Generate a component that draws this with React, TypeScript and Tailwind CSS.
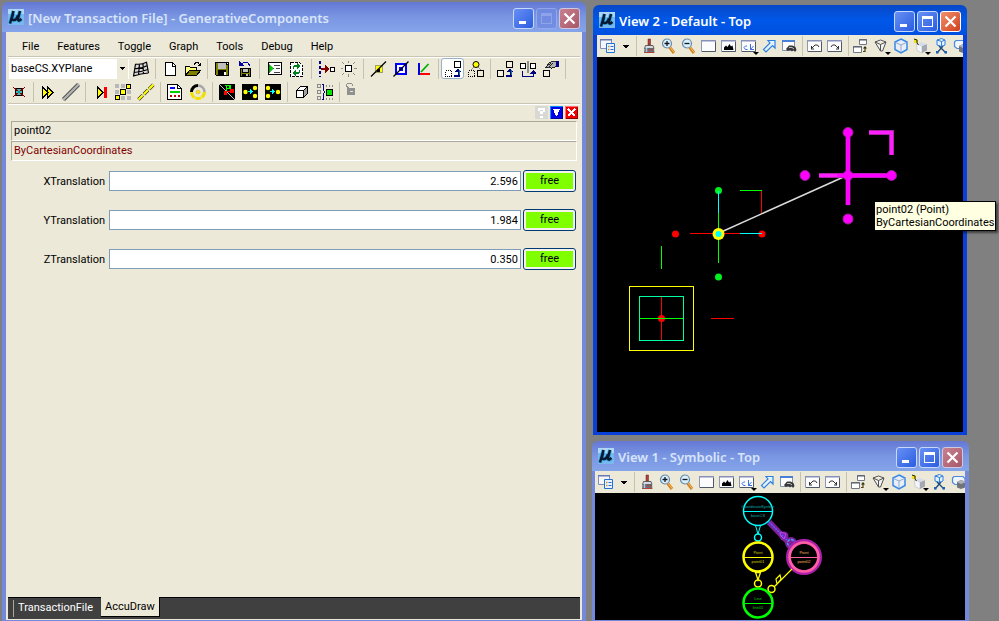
import type { ReactNode } from "react"
import { useState } from "react"
import clsx from "clsx"

type IconDef = { name: string; art: ReactNode; drop?: boolean; selected?: boolean }

function Pixels({ children, size = 16, smooth }: { children: ReactNode; size?: number; smooth?: boolean }) {
  return (
    <svg
      width={size}
      height={size}
      viewBox={`0 0 ${size} ${size}`}
      fill="none"
      shapeRendering={smooth ? "auto" : "crispEdges"}
      className="block shrink-0 overflow-visible"
      aria-hidden="true"
    >
      {children}
    </svg>
  )
}

function Box({ x, y, s = 6, fill = "none", stroke = "#000", dashed }: { x: number; y: number; s?: number; fill?: string; stroke?: string; dashed?: boolean }) {
  return <rect x={x + 0.5} y={y + 0.5} width={s} height={s} fill={fill} stroke={stroke} strokeDasharray={dashed ? "1 1" : undefined} />
}

const upArrow = (
  <>
    <path d="M9 14.500h4.500v-5" stroke="#000080" strokeWidth="2" />
    <path d="M13 7.500l3 3.500h-6z" fill="#000080" />
    <path d="M14 9h1v5h-1z" fill="#008080" />
  </>
)

const gridIcon = (
  <g shapeRendering="auto">
    <path d="M2.500 3Q8 4 14 1L15.500 12Q8 12 0.500 15.500z" fill="#d8d8d8" />
    <path d="M2.500 3Q8 4 14 1M2 7.500Q8 8 14.500 4.500M1 11.500Q8 11 15 8.500M0.500 15Q8 12.500 15.500 12M2.500 3L0.500 15.500M6.500 3L5.500 14M10 2.500L10.500 13M13.500 1L15.500 12" stroke="#000" strokeWidth="1.200" />
  </g>
)

const mainRowOne: IconDef[][] = [
  [{ name: "Work plane grid", art: gridIcon }],
  [
    {
      name: "New",
      art: (
        <>
          <path d="M3.500 1.500h7l3 3v9.500h-10z" fill="#fff" stroke="#000" />
          <path d="M10.500 1.500v3.500h3" stroke="#000" />
        </>
      ),
    },
    {
      name: "Open",
      art: (
        <>
          <path d="M0.500 14V5.500h4l1 1h6V10" fill="#ffff80" stroke="#000" />
          <path d="M0.500 14.500l4-5h11l-4 5z" fill="#808000" stroke="#000" />
          <path d="M9 3.500l2-2h2l2 2.500" stroke="#000" />
          <path d="M12 5h4V1z" fill="#000" />
        </>
      ),
    },
  ],
  [
    {
      name: "Save",
      art: (
        <>
          <path d="M1 1h14v14H2L1 14z" fill="#000" />
          <path d="M2 2h2v12H2zM12 4h2v10h-2zM4 8h8v1H4z" fill="#808000" />
          <path d="M4 2h8v6H4z" fill="#c0c0c0" />
          <path d="M10 11h2v3h-2zM13 2h1v1h-1z" fill="#fff" />
        </>
      ),
    },
    {
      name: "Save and revert",
      art: (
        <>
          <path d="M3 7h11v9H3z" fill="#000" />
          <path d="M4 8h1v7H4zM12 8h1v7h-1zM5 12h7v1H5z" fill="#808000" />
          <path d="M6 8h5v3H6zM9 13h2v2H9z" fill="#c0c0c0" />
          <path d="M4 3.500L6.500 1.500h4L13 5" stroke="#0000a0" />
          <path d="M2 0v5h5z" fill="#0000a0" />
        </>
      ),
    },
  ],
  [
    {
      name: "Run script",
      art: (
        <>
          <path d="M2.500 1.500h13v12h-13z" fill="#fff" stroke="#000" />
          <path d="M3 3.500v8l4.500-4z" fill="#00d000" stroke="#006000" strokeWidth="0.500" />
          <path d="M8 4.500h6M10 7.500h4M8 11.500h6" stroke="#404040" />
        </>
      ),
    },
    {
      name: "Update",
      art: (
        <>
          <path d="M1.500 1.500h9l3 3v11h-12z" fill="#fff" stroke="#000" strokeDasharray="3 1" />
          <path d="M4.500 8V6.500l1-1.500h3M10.500 8.500v2l-1 1.500h-3" stroke="#008020" strokeWidth="1.500" />
          <path d="M8 2l3.500 3L8 8zM7 9l-3.500 3L7 15z" fill="#008020" />
        </>
      ),
    },
  ],
  [
    {
      name: "Move to feature",
      art: (
        <>
          <path d="M2 0v16" stroke="#000090" strokeWidth="1.500" strokeDasharray="3 2" />
          <path d="M3 8h5" stroke="#800000" strokeWidth="2" />
          <path d="M7 4l5 4-5 4z" fill="#800000" />
          <Box x={12} y={6} s={4} fill="#fff" />
        </>
      ),
    },
    {
      name: "Highlight feature",
      art: (
        <>
          <Box x={4} y={4} fill="#fff" />
          <path d="M7.500 0v2M7.500 13v2.500M0 7.500h2M13 7.500h2.500M1 1l2 2M14 1l-2 2M1 14l2-2M14 14l-2-2" stroke="#909090" />
        </>
      ),
    },
  ],
  [
    {
      name: "Point",
      art: (
        <>
          <Box x={5} y={4} s={7} fill="#ffff00" stroke="#a0a060" />
          <path d="M1 15.500L16 0.500" stroke="#000" shapeRendering="auto" strokeWidth="1.200" />
          <path d="M7 8h3v3H7z" fill="#000" />
        </>
      ),
    },
    {
      name: "Plane",
      art: (
        <>
          <path d="M3 3h10v10H3z" stroke="#0000ff" strokeWidth="2" fill="#fff" />
          <path d="M6 6h4v4H6z" fill="#0000ff" />
          <path d="M0.500 15.500L15.500 0.500" stroke="#000" shapeRendering="auto" strokeWidth="1.200" />
        </>
      ),
    },
    {
      name: "Coordinate system",
      art: (
        <>
          <path d="M5 11l7.500-8" stroke="#00b000" strokeWidth="1.800" shapeRendering="auto" />
          <path d="M4 13h10" stroke="#ff0000" strokeWidth="2" />
          <path d="M3 2v12" stroke="#0000e0" strokeWidth="2" />
        </>
      ),
    },
  ],
  [
    {
      name: "Replicate",
      selected: true,
      art: (
        <>
          <Box x={0} y={9} dashed />
          <Box x={9} y={0} fill="#fff" />
          {upArrow}
        </>
      ),
    },
    {
      name: "Make dependent",
      art: (
        <>
          <path d="M6 6L3 9M10 6l3 3" stroke="#909090" />
          <circle cx="8" cy="3.500" r="3" fill="#ffff00" stroke="#000" shapeRendering="auto" />
          <Box x={0} y={9} dashed />
          <Box x={9} y={9} fill="#f0e8d0" />
        </>
      ),
    },
  ],
  [
    {
      name: "Copy up",
      art: (
        <>
          <Box x={0} y={9} fill="#f4efe0" />
          <Box x={9} y={0} fill="#f4efe0" />
          {upArrow}
        </>
      ),
    },
    {
      name: "Mirror",
      art: (
        <>
          <path d="M7 0h2v12H7z" fill="#909090" />
          <Box x={0} y={2} s={5} fill="#fff" />
          <Box x={10} y={2} s={5} fill="#fff" />
          <path d="M2.500 10v5h11v-4" stroke="#000080" />
          <path d="M13.500 9l3 3.500h-6z" fill="#000080" />
        </>
      ),
    },
    {
      name: "Edit by hand",
      art: (
        <>
          <Box x={0} y={9} fill="#f4efe0" />
          <path d="M2.500 6.500L6 2l3-1.500h4v4.500l-2 2-1-1-1.500 1.500L6 6l-3 1z" fill="#b0b0b0" stroke="#000" strokeWidth="0.800" />
          <path d="M5 4l3-2M6 5.500l4-3" stroke="#000" strokeWidth="0.800" />
          <path d="M13 0h3v6h-3z" fill="#000080" />
        </>
      ),
    },
  ],
]

const mainRowTwo: IconDef[][] = [
  [
    {
      name: "Delete",
      art: (
        <>
          <path d="M4.500 4.500h7v7h-7z" fill="#50b0b0" stroke="#000" />
          <path d="M2 3l12 10M14 3L2 13" stroke="#800000" />
          <path d="M7 7h2v2H7z" fill="#00a0a0" />
        </>
      ),
    },
  ],
  [
    {
      name: "Play all",
      art: <path d="M2.500 3v11L8 8.500zM7.500 3v11L13 8.500z" fill="#ffff00" stroke="#000" />,
    },
    {
      name: "Line",
      art: (
        <g shapeRendering="auto">
          <path d="M0.500 15.500L15.500 0.500" stroke="#303030" strokeWidth="4" />
          <path d="M0 16L16 0" stroke="#b0b0b0" strokeWidth="2.500" />
        </g>
      ),
    },
  ],
  [
    {
      name: "Step to end",
      art: (
        <>
          <path d="M5.500 3v11l5.500-5.500z" fill="#ffff00" stroke="#000" />
          <path d="M12 3h3v11h-3z" fill="#ff0000" />
        </>
      ),
    },
    {
      name: "Grid of points",
      art: (
        <>
          <path d="M0 0h4v4H0zM6 0h4v4H6zM0 6h4v4H0zM12 6h4v4h-4zM6 12h4v4H6zM12 12h4v4h-4z" fill="#b8b8b8" />
          <Box x={11} y={0} s={4} fill="#ffff00" />
          <Box x={5} y={5} s={5} fill="#ffff00" />
          <Box x={0} y={11} s={4} fill="#ffff00" />
        </>
      ),
    },
    {
      name: "Divide line",
      art: (
        <g shapeRendering="auto">
          <path d="M0.500 15.500L15.500 0.500" stroke="#303030" strokeWidth="3.500" strokeDasharray="6 1.500" />
          <path d="M0.500 15.500L15.500 0.500" stroke="#ffff00" strokeWidth="2.200" strokeDasharray="6 1.500" />
        </g>
      ),
    },
  ],
  [
    {
      name: "Report",
      art: (
        <>
          <path d="M0.500 0.500h10l4 4v11h-14z" fill="#fff" stroke="#000" />
          <path d="M10.500 0.500v4h4" stroke="#000" />
          <path d="M3 4h5" stroke="#0000ff" strokeWidth="2" />
          <path d="M3 8h10" stroke="#00d000" strokeWidth="2" />
          <path d="M3 12h10" stroke="#c00000" strokeWidth="2" strokeDasharray="2 2" />
        </>
      ),
    },
    {
      name: "Cycle",
      art: (
        <g shapeRendering="auto">
          <path d="M1.500 8A6.500 6.500 0 0 1 8 1.500" stroke="#000" strokeWidth="3" />
          <path d="M8 1.500A6.500 6.500 0 0 1 14.500 8" stroke="#a8a8a8" strokeWidth="2.500" />
          <path d="M14.500 8A6.500 6.500 0 0 1 1.500 8" stroke="#f0e000" strokeWidth="3" strokeDasharray="6 0.800" />
          <circle cx="8" cy="8" r="2" fill="#ffe000" stroke="#c0b060" strokeWidth="0.500" />
        </g>
      ),
    },
  ],
  [
    {
      name: "Model view",
      art: (
        <>
          <path d="M0 0h16v16H0z" fill="#000" />
          <path d="M0 0l16 16" stroke="#c0c0c0" />
          <path d="M7.500 8V2M6 1.500h5v3M8 4.500h3" stroke="#00ff00" strokeWidth="1.500" />
          <path d="M7 7.500h6" stroke="#ff0000" strokeWidth="1.500" />
          <path d="M11 5h4v4h-4zM5 7h3v4H5z" fill="#ff0000" />
        </>
      ),
    },
    {
      name: "Expand graph",
      art: (
        <>
          <path d="M0 0h16v16H0z" fill="#000" />
          <path d="M6 7.500h3" stroke="#00ffff" />
          <path d="M8 5l3 2.500L8 10z" fill="#00ffff" />
          <g fill="#ffff00" shapeRendering="auto">
            <circle cx="3.500" cy="8" r="2.200" />
            <circle cx="13" cy="4" r="2.200" />
            <circle cx="13" cy="12" r="2.200" />
          </g>
        </>
      ),
    },
    {
      name: "Collapse graph",
      art: (
        <>
          <path d="M0 0h16v16H0z" fill="#000" />
          <path d="M5 7.500h3" stroke="#00ffff" />
          <path d="M7 5l3 2.500L7 10z" fill="#00ffff" />
          <g fill="#ffff00" shapeRendering="auto">
            <circle cx="3" cy="4" r="2.200" />
            <circle cx="3" cy="12" r="2.200" />
            <circle cx="13" cy="8" r="2.200" />
          </g>
        </>
      ),
    },
  ],
  [
    {
      name: "Solid",
      art: (
        <>
          <path d="M2.500 6.500l4-4h7v7l-4 4h-7z" fill="#fff" stroke="#000" />
          <path d="M9.500 6.500l4-4v7l-4 4z" fill="#a0a0a0" stroke="#000" />
          <path d="M2.500 6.500h7v7" stroke="#000" />
        </>
      ),
    },
    {
      name: "Feature group",
      art: (
        <>
          <Box x={0} y={0} s={3} stroke="#888" />
          <Box x={0} y={6} s={3} stroke="#888" />
          <Box x={0} y={12} s={3} stroke="#888" />
          <path d="M5 0.500h1.500v6l1.500 1.500-1.500 1.500v6H5" stroke="#000080" />
          <Box x={9} y={5} s={6} fill="#00e800" />
          <path d="M9 1.500h8M9 14.500h8" stroke="#909090" strokeDasharray="1 2" strokeWidth="2" />
        </>
      ),
    },
  ],
  [
    {
      name: "Unlocked",
      art: (
        <>
          <path d="M1 4h8v7H1z" fill="#909090" />
          <path d="M2.500 4L0.500 2V0.500L2 -1h3l1.500 1.500V2" stroke="#909090" />
          <path d="M4 7h3v1H4z" fill="#ece9d8" />
        </>
      ),
    },
  ],
]

const winFrame = (
  <>
    <path d="M0.500 2.500h14v11h-14z" fill="#fcfcff" stroke="#9098b0" />
    <path d="M0 2h15v1.500H0z" fill="#8890b8" />
    <path d="M1 13.500h13.500V4" stroke="#505868" />
  </>
)

const lens = (
  <>
    <path d="M8.500 9l4.500 6" stroke="#d08020" strokeWidth="3" />
    <path d="M9 9l4.500 6" stroke="#f8c060" />
    <circle cx="6" cy="5.500" r="4.500" fill="#d8f0fc" stroke="#6888a8" strokeWidth="1.200" />
  </>
)

const layersIcon = (
  <>
    <path d="M0.500 1.500h11v9h-11z" fill="#f4f6fc" stroke="#8090b8" />
    <path d="M0 1h12v1.500H0z" fill="#6878b0" />
    <path d="M6.500 5.500h8v9h-8z" fill="#e8f4ff" stroke="#2870d0" />
    <path d="M8 8.500h1.500M8 11.500h1.500" stroke="#e09020" strokeWidth="1.500" />
    <path d="M10.500 8.500h3M10.500 11.500h3" stroke="#2870d0" />
  </>
)

const viewIcons: IconDef[][] = [
  [
    {
      name: "Update view",
      art: (
        <>
          <path d="M7 1h2.500v6H7z" fill="#b04038" stroke="#602020" strokeWidth="0.500" />
          <path d="M4.500 7.500h7.500l1 3H3.500z" fill="#d8d8e0" stroke="#404040" strokeWidth="0.800" />
          <path d="M3.500 10.500h9.500l0.500 4.500H3z" fill="#687078" />
          <path d="M4 12h8.500M3.500 14.500h9.500" stroke="#b04038" />
          <path d="M5.500 10v4" stroke="#98d0f0" strokeWidth="1.500" />
        </>
      ),
    },
    { name: "Zoom in", art: <>{lens}<path d="M3.500 5.500h5M6 3v5" stroke="#101828" strokeWidth="1.300" /></> },
    { name: "Zoom out", art: <>{lens}<path d="M3.500 5.500h5" stroke="#101828" strokeWidth="1.300" /></> },
    { name: "Window area", art: winFrame },
    { name: "Fit view", art: <>{winFrame}<path d="M3 12V9.500l2-2 1.500 1.500 2-3 1.500 2.500 1.500-1 1 4.500z" fill="#000" /></> },
    {
      name: "Rotate view",
      drop: true,
      art: (
        <>
          {winFrame}
          <path d="M6 8H4.500L3 9.500 4.500 11.500H6.500M9.500 6v5.500H13M9.500 11.500L12.500 8" stroke="#3870d8" />
        </>
      ),
    },
    { name: "Pan view", art: <path d="M7 2.500h7v7.500l-2.500-2.500-6.500 6.500-2.500-2.500L9 5z" fill="#e4f4ff" stroke="#3080e0" strokeWidth="1.200" /> },
    {
      name: "Walk",
      art: (
        <>
          <path d="M1.500 2.500h12v10h-12z" fill="#fff" stroke="#8090b0" />
          <path d="M1 2h13v2H1z" fill="#4880d8" />
          <path d="M5 11l3-3.500h3.500l3 1.500 1 3-1.500 2-1.500-2-1.500 1.500-1.500-1.500-3 1z" fill="#383838" />
          <path d="M8 9.500h3l2 1.500" stroke="#c0c0c0" />
        </>
      ),
    },
  ],
  [
    { name: "View previous", art: <>{winFrame}<path d="M4 11h3M4.500 11V8M4.500 10.500L8 7h2.500l1.500 2" stroke="#303030" /></> },
    { name: "View next", art: <>{winFrame}<path d="M12 11H9M11.500 11V8M11.500 10.500L8 7H5.500L4 9" stroke="#303030" /></> },
  ],
  [
    {
      name: "Copy view",
      art: (
        <>
          <path d="M6.500 1.500h7v5h-7zM0.500 8.500h8v6h-8z" fill="#fff" stroke="#707888" />
          <path d="M6 2h8M0 9h9" stroke="#505868" strokeWidth="1.200" />
          <path d="M10 13.500h2V10" stroke="#504010" strokeWidth="1.200" />
          <path d="M12 8l2 2.500h-4z" fill="#303010" />
        </>
      ),
    },
    {
      name: "View perspective",
      drop: true,
      art: <path d="M2 4l5.500-2L13 4l-3.500 9h-2zM2 4l5.500 2.500L13 4M7.500 6.500V13" fill="#f4f4f4" stroke="#505050" />,
    },
    {
      name: "Display style",
      art: (
        <>
          <path d="M8 1l6 3v7.500L8 15l-6-3.500V4z" fill="#e8eef8" stroke="#3888e8" strokeWidth="1.500" />
          <path d="M2.500 4.500L8 7l5.500-2.500M8 7v7" stroke="#90a8c8" />
        </>
      ),
    },
    {
      name: "Lighting",
      drop: true,
      art: (
        <>
          <path d="M3.500 6l5.500 2v7l-5-2.500z" fill="#f4f6fa" stroke="#a8acb8" strokeWidth="0.500" />
          <path d="M9 8l5-2v6.500L9 15z" fill="#a4a8b4" />
          <path d="M3.500 6l5-2L14 6 9 8z" fill="#d8dce8" />
          <path d="M1 1h4v4H1z" fill="#f0e020" />
          <path d="M1 1l3 1v3l1.500 2" stroke="#202010" />
        </>
      ),
    },
    {
      name: "Clip volume",
      art: (
        <>
          <path d="M4 2l4.500-1.500L12 2v5L8.500 8.500 4 7zM4 2l4.500 1.500L12 2M8.500 3.500v5" fill="#e4f2ff" stroke="#3080e0" />
          <path d="M4 15l6-7M13 15L6 8" stroke="#204878" strokeWidth="1.300" />
          <path d="M3 13h2.500v2.500H3zM11.500 13H14v2.500h-2.500z" fill="#2060b8" />
        </>
      ),
    },
    {
      name: "Clip mask",
      art: (
        <>
          <path d="M3 2.500h9l2 2v6H4l-2.500-2V4z" fill="#f0f4fc" stroke="#4888e0" strokeWidth="1.200" />
          <path d="M6 8l4-2 5 2v5l-5 2-4-1.500z" fill="#707478" />
          <path d="M6 8l4-2 5 2-5 2z" fill="#b0b4b8" />
        </>
      ),
    },
  ],
]

function Logo() {
  return (
    <svg width="16" height="16" viewBox="0 0 16 16" fill="none" className="block shrink-0" aria-hidden="true">
      <rect width="16" height="16" fill="#78b8ec" />
      <path d="M0 0h16v5H0z" fill="#b0d8f4" />
      <path d="M5.500 2L2 14.500M5 5l-1 4q0 2.500 2 2 2.500 0 4-4.500M12 2L10 10q0 2 1.500 1.500l2-1.500" stroke="#30a8e8" strokeWidth="4" />
      <path d="M5.500 2L2 14.500M5 5l-1 4q0 2.500 2 2 2.500 0 4-4.500M12 2L10 10q0 2 1.500 1.500l2-1.500" stroke="#0c1830" strokeWidth="2.400" />
    </svg>
  )
}

function CaptionButton({ kind, active, disabled }: { kind: "Minimize" | "Maximize" | "Close"; active?: boolean; disabled?: boolean }) {
  return (
    <button
      type="button"
      aria-label={kind}
      disabled={disabled}
      className={clsx(
        "flex size-[21px] shrink-0 items-center justify-center rounded-[3px] border",
        disabled && "border-[#9aaef0] bg-[#6f8ae0] opacity-80",
        !disabled && kind !== "Close" && "border-[#c8d8fa] bg-linear-to-br from-[#6890f4] to-[#2a5ce0]",
        kind === "Close" && active && "border-white bg-linear-to-br from-[#f0906c] to-[#d03c14]",
        kind === "Close" && !active && "border-[#d0c8e0] bg-linear-to-br from-[#c88090] to-[#a85868]",
      )}
    >
      <Pixels size={15} smooth={kind === "Close"}>
        {kind === "Minimize" && <path d="M3 10h7v3H3z" fill="#fff" />}
        {kind === "Maximize" && <path d="M2 2h11v11H2zM3 5h9v7H3z" fillRule="evenodd" fill={disabled ? "#94a8ec" : "#fff"} />}
        {kind === "Close" && <path d="M2.500 2.500l10 10M12.500 2.500l-10 10" stroke="#fff" strokeWidth="2.200" />}
      </Pixels>
    </button>
  )
}

function TitleBar({ title, active, noMax }: { title: string; active?: boolean; noMax?: boolean }) {
  return (
    <header
      className={clsx(
        "flex h-[30px] shrink-0 items-center gap-1 rounded-t-[6px] px-[6px]",
        active
          ? "bg-linear-to-b from-[#0848c8] via-[#0058e8] to-[#0050e0]"
          : "bg-linear-to-b from-[#6478d4] via-[#7a96e2] to-[#84a4ea]",
      )}
    >
      <Logo />
      <h1
        className={clsx(
          "min-w-0 flex-1 truncate pt-[2px] font-['Noto_Sans','Open_Sans',sans-serif] text-[13px] leading-5 font-semibold",
          active ? "text-white" : "text-[#d8e4fa]",
        )}
      >
        {title}
      </h1>
      <div className="flex gap-[2px] pt-[2px]">
        <CaptionButton kind="Minimize" active={active} />
        <CaptionButton kind="Maximize" active={active} disabled={noMax} />
        <CaptionButton kind="Close" active={active} />
      </div>
    </header>
  )
}

function Separator() {
  return (
    <div className="flex w-[6px] shrink-0 justify-center">
      <div className="h-5 w-px bg-[#c5c2b0]" />
    </div>
  )
}

function ToolbarRow({ groups, trailing }: { groups: IconDef[][]; trailing?: boolean }) {
  return (
    <div className="flex h-[23px] items-center">
      {groups.map((group, i) => (
        <div key={group[0].name} className="flex items-center">
          {group.map((icon) => (
            <button
              key={icon.name}
              type="button"
              aria-label={icon.name}
              className={clsx(
                "flex h-[21px] w-[23px] shrink-0 items-center justify-center",
                icon.selected && "rounded-[3px] border border-[#98b0c8] bg-white",
              )}
            >
              <Pixels>{icon.art}</Pixels>
            </button>
          ))}
          {(trailing || i < groups.length - 1) && <Separator />}
        </div>
      ))}
    </div>
  )
}

function ViewToolbar() {
  return (
    <div className="flex h-[22px] shrink-0 items-center overflow-hidden bg-[#ece9d8] pl-px">
      <button type="button" aria-label="View attributes" className="flex w-5 shrink-0 justify-center">
        <Pixels smooth>{layersIcon}</Pixels>
      </button>
      <button type="button" aria-label="View list" className="flex w-[15px] shrink-0 justify-center">
        <Pixels size={7}>
          <path d="M0 2h7L3.500 5.500z" fill="#000" />
        </Pixels>
      </button>
      <Separator />
      {viewIcons.map((group, i) => (
        <div key={group[0].name} className="flex shrink-0 items-center">
          {group.map((icon) => (
            <button key={icon.name} type="button" aria-label={icon.name} className="flex w-5 shrink-0 justify-center">
              <Pixels smooth>
                {icon.art}
                {icon.drop && <path d="M12 14h6l-3 3z" fill="#000" />}
              </Pixels>
            </button>
          ))}
          {i < viewIcons.length - 1 && <Separator />}
        </div>
      ))}
    </div>
  )
}

const menus = ["File", "Features", "Toggle", "Graph", "Tools", "Debug", "Help"]

const coordinates = [
  { label: "XTranslation", value: "2.596" },
  { label: "YTranslation", value: "1.984" },
  { label: "ZTranslation", value: "0.350" },
]

function AccuDrawPanel() {
  const [values, setValues] = useState(coordinates.map((c) => c.value))

  return (
    <section className="flex flex-1 flex-col pr-1 pl-[5px]">
      <div className="flex h-[15px] items-end justify-end gap-[2px]">
        <button type="button" aria-label="Help" className="size-[13px] bg-[#d8d8d4]">
          <Pixels size={13}>
            <path d="M3 2h7v4H8v2H5V5h3V4H5v1H3zM5 10h3v2H5z" fill="#fff" />
          </Pixels>
        </button>
        <button type="button" aria-label="Collapse" className="size-[13px] bg-[#0000e8]">
          <Pixels size={13}>
            <path d="M0.500 12.500V0.500h12" stroke="#0090ff" />
            <path d="M12.500 1v11.500H1" stroke="#000090" />
            <path d="M3 3h7l-3 7H6z" fill="#fff" />
          </Pixels>
        </button>
        <button type="button" aria-label="Close panel" className="size-[13px] bg-[#f00000]">
          <Pixels size={13}>
            <path d="M0.500 12.500V0.500h12" stroke="#ff7070" />
            <path d="M12.500 1v11.500H1" stroke="#900000" />
            <path d="M3 3l7 7M10 3l-7 7" stroke="#fff" strokeWidth="2" />
          </Pixels>
        </button>
      </div>

      <div className="mt-[2px] mr-px flex flex-col">
        <div className="h-5 border border-t-[#aca899] border-r-white border-b-white border-l-[#aca899] pl-[2px] leading-[18px]">
          point02
        </div>
        <div className="h-5 border border-t-[#aca899] border-r-white border-b-white border-l-[#aca899] pl-[2px] leading-[18px] text-[#800000]">
          ByCartesianCoordinates
        </div>
      </div>

      <div className="mt-[9px] mr-[2px] flex flex-col gap-[17px]">
        {coordinates.map((c, i) => (
          <div key={c.label} className="flex h-[22px] items-center">
            <label htmlFor={c.label} className="w-[94px] shrink-0 text-right">
              {c.label}
            </label>
            <input
              id={c.label}
              type="text"
              value={values[i]}
              onChange={(e) => setValues(values.map((v, n) => (n === i ? e.target.value : v)))}
              className="ml-1 h-5 min-w-0 flex-1 border border-[#7f9db9] bg-white px-[2px] text-right outline-none"
            />
            <button
              type="button"
              className="ml-[2px] h-[22px] w-[53px] shrink-0 rounded-[3px] border border-[#003c74] bg-[#f4f2ea] p-[2px]"
            >
              <span className="block h-4 bg-[#80ff00] leading-4">free</span>
            </button>
          </div>
        ))}
      </div>
    </section>
  )
}

function MainWindow() {
  const [tab, setTab] = useState("AccuDraw")

  return (
    <div className="flex min-w-0 flex-col">
      <TitleBar title="[New Transaction File] - GenerativeComponents" noMax />
      <div className="flex flex-1 flex-col border-x-4 border-b border-[#7488dc] bg-[#ece9d8]">
        <nav className="flex h-6 shrink-0 items-center gap-[18px] pt-1 pl-4">
          {menus.map((m) => (
            <button key={m} type="button">
              {m}
            </button>
          ))}
        </nav>

        <div className="mx-[2px] flex flex-col border-y border-[#c8c5b4] shadow-[0_1px_0_#fff,inset_0_1px_0_#fff]">
          <div className="flex items-center">
            <div className="relative ml-px w-[120px]">
              <select aria-label="Work plane" className="h-5 w-full appearance-none bg-white pl-[2px] leading-5 outline-none">
                <option>baseCS.XYPlane</option>
              </select>
              <span className="pointer-events-none absolute inset-y-0 right-px flex w-[11px] items-center justify-center bg-[#ece9d8]">
                <Pixels size={5}>
                  <path d="M0 1h5L2.500 4z" fill="#000" />
                </Pixels>
              </span>
            </div>
            <ToolbarRow groups={mainRowOne} trailing />
          </div>
          <div className="-ml-px">
            <ToolbarRow groups={mainRowTwo} />
          </div>
        </div>

        <AccuDrawPanel />

        <div role="tablist" className="mx-[2px] mb-px flex h-[22px] shrink-0 border-t border-black bg-[#404040]">
          <div className="my-[2px] ml-[5px] w-px bg-[#aca899]" />
          {["TransactionFile", "AccuDraw"].map((t) => (
            <button
              key={t}
              type="button"
              role="tab"
              aria-selected={tab === t}
              onClick={() => setTab(t)}
              className={clsx(
                "-mt-px h-5 px-1",
                tab === t ? "ml-1 border-r border-b border-black bg-[#ece9d8] text-black" : "text-white",
              )}
            >
              {t}
            </button>
          ))}
        </div>
      </div>
    </div>
  )
}

// Geometry view: base plane, two points with their handles, joining line
function ModelScene() {
  return (
    <svg width="366" height="375" viewBox="0 0 366 375" fill="none" className="block shrink-0">
      <g shapeRendering="crispEdges">
        <path d="M32.500 229.500h64v64h-64z" stroke="#ffff00" />
        <path d="M42.500 239.500h44v44h-44z" stroke="#00ffa0" />
      </g>
      <circle cx="64.500" cy="261.500" r="3.500" fill="#ff0000" />
      <g shapeRendering="crispEdges">
        <path d="M64.500 240v43" stroke="#ff0000" />
        <path d="M43 261.500h43M64.500 189v23" stroke="#00ff00" />
        <path d="M114 261.500h23M93 176.500h50M164.500 134v22" stroke="#ff0000" />
        <path d="M121.500 156v50M143 133.500h22" stroke="#00ff00" />
      </g>
      <path d="M122 176L251 118" stroke="#dcdcdc" strokeWidth="1.500" />
      <circle cx="121.500" cy="177" r="6" fill="#ffff00" />
      <circle cx="121.500" cy="177" r="3" fill="#00ffff" />
      <circle cx="78.500" cy="177" r="3.500" fill="#ff0000" />
      <circle cx="165" cy="177" r="3.500" fill="#ff0000" />
      <circle cx="121.500" cy="133.500" r="3.500" fill="#00f020" />
      <circle cx="121.500" cy="220" r="3.500" fill="#00f020" />
      <path d="M121.500 134v22M143 176.500h22" stroke="#00ffff" shapeRendering="crispEdges" />

      <path d="M251 76v72M222 118.500h73M272 75.500h22.500v22.500" stroke="#902090" strokeWidth="5" />
      <path d="M251 76v72M222 118.500h73M272 75.500h22.500v22.500" stroke="#ff20ff" strokeWidth="3.500" />
      <g fill="#ff00ff" stroke="#902090">
        <circle cx="251" cy="75.500" r="5" />
        <circle cx="251" cy="118.500" r="5" />
        <circle cx="251" cy="162" r="5" />
        <circle cx="208" cy="118.500" r="5" />
        <circle cx="294.500" cy="118.500" r="5" />
      </g>
      <path d="M251 79v69M240 118.500h53" stroke="#ff00ff" strokeWidth="3.500" />
    </svg>
  )
}

const nodes = [
  { id: "baseCS", type: "CoordinateSystem", x: 163, y: 18, color: "#00ffff", text: "#00b0b0", weight: 1.5 },
  { id: "point01", type: "Point", x: 163, y: 64, color: "#ffff00", text: "#d0d000", weight: 2.5 },
  { id: "point02", type: "Point", x: 209, y: 64, color: "#ff60a0", text: "#ffb060", weight: 2.5 },
  { id: "line01", type: "Line", x: 163, y: 110, color: "#00ff00", text: "#00d000", weight: 2.5 },
]

// Dependency graph of the features
function GraphScene() {
  return (
    <svg width="370" height="127" viewBox="0 0 370 127" fill="none" className="block shrink-0">
      <path d="M174 29L198 54" stroke="#80209c" strokeWidth="6" />
      <circle cx="189" cy="43" r="4.500" fill="#80209c" />
      <circle cx="196" cy="50" r="6" fill="#80209c" />
      <path d="M174 29L192 47" stroke="#4868ff" strokeWidth="1.500" strokeDasharray="2 1" />
      <path d="M186 39l5 2-2 5-4-4z" stroke="#c040ff" />
      <circle cx="196" cy="50" r="3.500" stroke="#40a0ff" strokeWidth="1.300" strokeDasharray="3 1" />
      <circle cx="209" cy="64" r="15.500" stroke="#b020b0" strokeWidth="5" />
      <path d="M160.500 32.500h5L163 41z" stroke="#00ffff" />
      <circle cx="163" cy="44.500" r="3.500" stroke="#00ffff" strokeWidth="1.500" />
      <path d="M160.500 79.500h5L163 87z" stroke="#ffff00" strokeWidth="1.300" />
      <circle cx="163" cy="90.500" r="3.500" stroke="#ffff00" strokeWidth="1.500" />
      <path d="M197 76L179 94M186 86l-4 5-1-5 4-4z" stroke="#ffff00" strokeWidth="1.200" />
      <circle cx="176.500" cy="96" r="3.500" stroke="#ffff00" strokeWidth="1.500" />
      {nodes.map((n) => (
        <g key={n.id}>
          <circle cx={n.x} cy={n.y} r={14.5} stroke={n.color} strokeWidth={n.weight} />
          <path d={`M${n.x - 14} ${n.y + 0.5}h28`} stroke={n.color} shapeRendering="crispEdges" />
          <text x={n.x} y={n.y - 3} fill={n.text} textAnchor="middle" className="font-['Liberation_Sans',sans-serif] text-[4px]">
            {n.type}
          </text>
          <text x={n.x} y={n.y + 6} fill={n.text} textAnchor="middle" className="font-['Liberation_Sans',sans-serif] text-[4px]">
            {n.id}
          </text>
        </g>
      ))}
    </svg>
  )
}

export default function App() {
  return (
    <div className="grid h-screen grid-cols-[minmax(0,584fr)_minmax(0,377fr)] gap-[6px] overflow-hidden bg-[#808080] pt-[2px] pr-[30px] pl-[2px] font-[Roboto,'Liberation_Sans',sans-serif] text-[11px] leading-[13px] text-black">
      <MainWindow />

      <div className="flex min-w-0 flex-col gap-[6px] pt-[3px]">
        <section className="relative mr-[2px] ml-px flex min-h-0 flex-[430] flex-col">
          <TitleBar title="View 2 - Default - Top" active />
          <div className="flex min-h-0 flex-1 flex-col border-x-4 border-b-[3px] border-[#0840d8]">
            <ViewToolbar />
            <div className="flex-1 overflow-hidden bg-black">
              <ModelScene />
            </div>
          </div>
          <div
            role="tooltip"
            className="absolute top-[196px] left-[281px] border border-black bg-[#ffffe1] px-px py-px whitespace-nowrap shadow-[2px_2px_2px_rgba(0,0,0,0.5)]"
          >
            <p>point02 (Point)</p>
            <p>ByCartesianCoordinates</p>
          </div>
        </section>

        <section className="flex min-h-0 flex-[180] flex-col">
          <TitleBar title="View 1 - Symbolic - Top" />
          <div className="flex min-h-0 flex-1 flex-col border-r-4 border-b border-l-[3px] border-[#7488dc]">
            <ViewToolbar />
            <div className="flex-1 overflow-hidden bg-black">
              <GraphScene />
            </div>
          </div>
        </section>
      </div>
    </div>
  )
}
